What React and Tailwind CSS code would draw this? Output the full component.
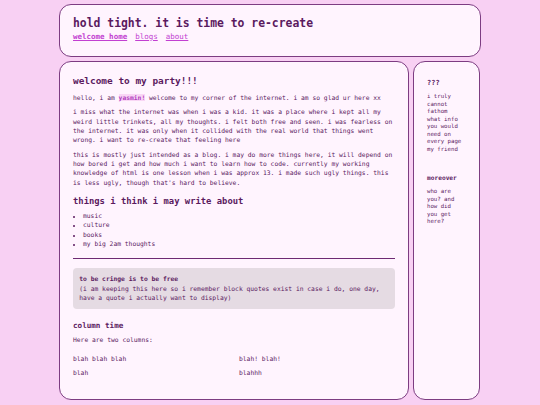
import React from 'react';

const nav = [
  { label: 'welcome home', active: true },
  { label: 'blogs' },
  { label: 'about' },
];

export default function App() {
  return (
    <div className="min-h-screen bg-[#f8d0f3] font-['DejaVu_Sans_Mono',monospace] text-[#5b1a5f]">
      <div className="mx-auto w-[422px] pt-[4px]">
        <header className="h-[53px] rounded-[12px] border border-[#7d3c82] bg-[#fff4fe] px-[13px] pt-[11px]">
          <h1 className="text-[11.4px] font-bold leading-[14px]">hold tight. it is time to re-create</h1>
          <nav className="mt-[2px] flex gap-[8px] text-[7.5px] leading-[10px]">
            {nav.map(n => (
              <a
                key={n.label}
                href="#"
                className={'text-[#c23fd1] underline ' + (n.active ? 'font-bold' : '')}
              >
                {n.label}
              </a>
            ))}
          </nav>
        </header>

        <div className="mt-[4px] flex h-[339px] gap-[4px]">
          <main className="w-[350px] rounded-[12px] border border-[#7d3c82] bg-[#fff4fe] px-[13px] pt-[13px] text-[6.32px] leading-[9.33px]">
            <h2 className="text-[9.44px] font-bold leading-[12px]">welcome to my party!!!</h2>
            <p className="mt-[5.7px]">
              hello, i am <mark className="bg-[#f9d6f5] font-bold text-[#b13ebf]">yasmin!</mark> welcome to my corner of the internet. i am so glad ur here xx
            </p>
            <p className="mt-[5.3px]">
              i miss what the internet was when i was a kid. it was a place where i kept all my weird little trinkets, all my thoughts. i felt both free and seen. i was fearless on the internet. it was only when it collided with the real world that things went wrong. i want to re-create that feeling here
            </p>
            <p className="mt-[5.1px]">
              this is mostly just intended as a blog. i may do more things here, it will depend on how bored i get and how much i want to learn how to code. currently my working knowledge of html is one lesson when i was approx 13. i made such ugly things. this is less ugly, though that's hard to believe.
            </p>

            <h3 className="mt-[8.5px] text-[8.86px] font-bold leading-[11px]">things i think i may write about</h3>
            <ul className="mt-[4.2px] list-disc pl-[10px] leading-[9.45px] marker:text-[5px]">
              <li>music</li>
              <li>culture</li>
              <li>books</li>
              <li>my big 2am thoughts</li>
            </ul>

            <hr className="mt-[9px] border-t border-[#6e2a73]" />

            <blockquote className="mt-[9.5px] rounded-[4px] bg-[#e5dbe3] px-[6.3px] py-[5.9px] leading-[9.67px]">
              <div className="font-bold">to be cringe is to be free</div>
              <div>(i am keeping this here so i remember block quotes exist in case i do, one day, have a quote i actually want to display)</div>
            </blockquote>

            <h4 className="mt-[11.7px] text-[7.6px] font-bold leading-[10px]">column time</h4>
            <p className="mt-[4.6px] leading-[9.3px]">Here are two columns:</p>
            <div className="mt-[10px] grid grid-cols-2 gap-x-[10px] gap-y-[4.7px] leading-[9.3px]">
              <p>blah blah blah</p>
              <p>blah! blah!</p>
              <p>blah</p>
              <p>blahhh</p>
            </div>
          </main>

          <aside className="w-[67px] rounded-[12px] border border-[#7d3c82] bg-[#fff4fe] pl-[13px] pr-[15.5px] pt-[17px] text-[5.7px] leading-[7.57px]">
            <h4 className="text-[7px] font-bold leading-[9px]">???</h4>
            <p className="mt-[5px]">i truly cannot fathom what info you would need on every page my friend</p>
            <h4 className="mt-[20px] text-[6.2px] font-bold leading-[8px]">moreover</h4>
            <p className="mt-[6.6px]">who are you? and how did you get here?</p>
          </aside>
        </div>
      </div>
    </div>
  );
}
